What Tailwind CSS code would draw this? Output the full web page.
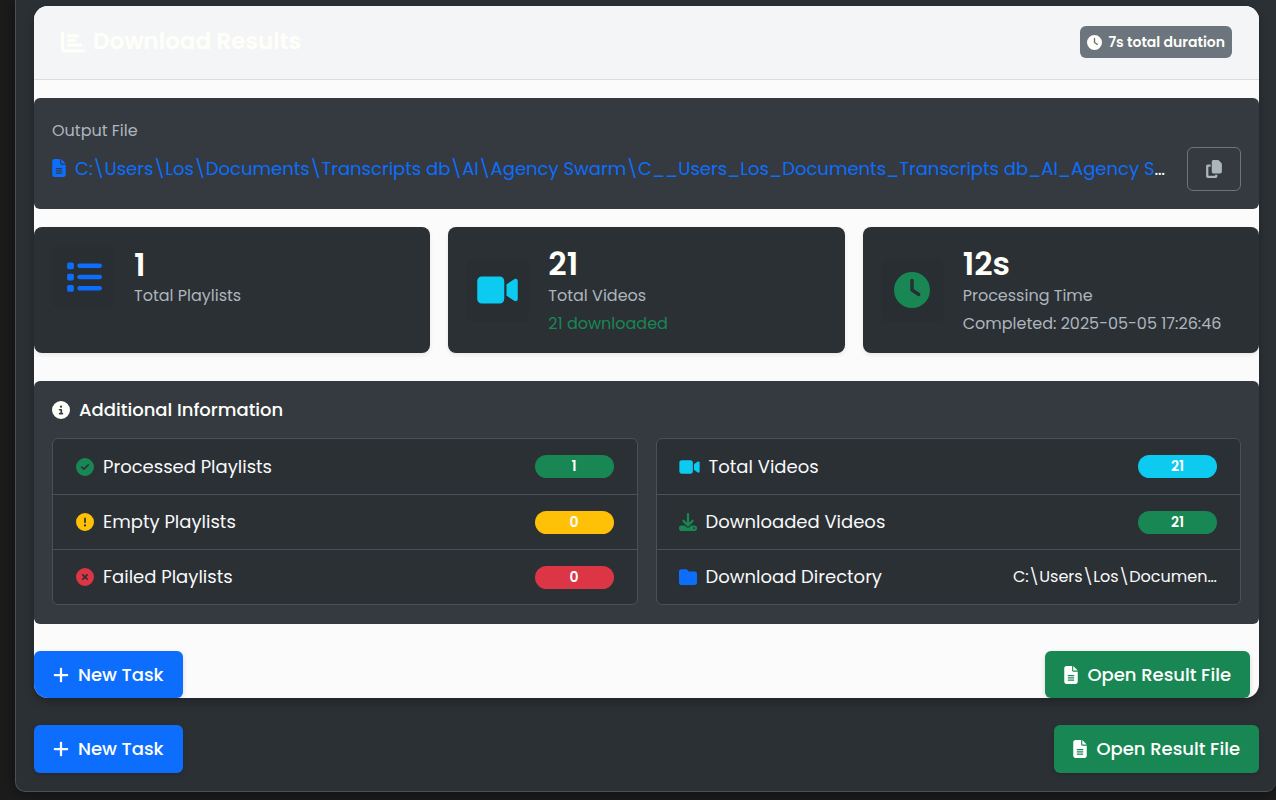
<!DOCTYPE html>
<html lang="en">
<head>
<meta charset="utf-8">
<meta name="viewport" content="width=device-width, initial-scale=1">
<title>Download Results</title>
<script src="https://cdn.jsdelivr.net/npm/@tailwindcss/browser@4"></script>
</head>
<body class="min-h-screen bg-[#1c1c1c] font-[Poppins,Inter,sans-serif] text-lg text-[#f8f9fa]">
<svg class="hidden" aria-hidden="true">
  <symbol id="chart" viewBox="0 0 512 512"><path d="M32 32c17.7 0 32 14.3 32 32V400c0 8.8 7.2 16 16 16H480c17.7 0 32 14.3 32 32s-14.3 32-32 32H80c-44.2 0-80-35.8-80-80V64C0 46.3 14.3 32 32 32zm96 96c0-17.7 14.3-32 32-32H352c17.7 0 32 14.3 32 32s-14.3 32-32 32H160c-17.7 0-32-14.3-32-32zm32 64H288c17.7 0 32 14.3 32 32s-14.3 32-32 32H160c-17.7 0-32-14.3-32-32s14.3-32 32-32zm0 96H416c17.7 0 32 14.3 32 32s-14.3 32-32 32H160c-17.7 0-32-14.3-32-32s14.3-32 32-32z"/></symbol>
  <symbol id="clock" viewBox="0 0 512 512"><path d="M256 0a256 256 0 1 1 0 512A256 256 0 1 1 256 0zM232 120V256c0 8 4 15.5 10.7 20l96 64c11 7.4 25.9 4.4 33.3-6.7s4.4-25.9-6.7-33.3L280 243.2V120c0-13.3-10.7-24-24-24s-24 10.7-24 24z"/></symbol>
  <symbol id="file" viewBox="0 0 384 512"><path d="M64 0C28.7 0 0 28.7 0 64V448c0 35.3 28.7 64 64 64H320c35.3 0 64-28.7 64-64V160H256c-17.7 0-32-14.3-32-32V0H64zM256 0V128H384L256 0zM112 256H272c8.8 0 16 7.2 16 16s-7.2 16-16 16H112c-8.8 0-16-7.2-16-16s7.2-16 16-16zm0 64H272c8.8 0 16 7.2 16 16s-7.2 16-16 16H112c-8.8 0-16-7.2-16-16s7.2-16 16-16zm0 64H272c8.8 0 16 7.2 16 16s-7.2 16-16 16H112c-8.8 0-16-7.2-16-16s7.2-16 16-16z"/></symbol>
  <symbol id="copy" viewBox="0 0 448 512"><path d="M208 0H332.1c12.7 0 24.9 5.1 33.9 14.1l67.9 67.9c9 9 14.1 21.2 14.1 33.9V336c0 26.5-21.5 48-48 48H208c-26.5 0-48-21.5-48-48V48c0-26.5 21.5-48 48-48zM48 128h80v64H64V448H256V416h64v48c0 26.5-21.5 48-48 48H48c-26.5 0-48-21.5-48-48V176c0-26.5 21.5-48 48-48z"/></symbol>
  <symbol id="list" viewBox="0 0 512 512"><path d="M40 48C26.7 48 16 58.7 16 72v48c0 13.3 10.7 24 24 24H88c13.3 0 24-10.7 24-24V72c0-13.3-10.7-24-24-24H40zM192 64c-17.7 0-32 14.3-32 32s14.3 32 32 32H480c17.7 0 32-14.3 32-32s-14.3-32-32-32H192zm0 160c-17.7 0-32 14.3-32 32s14.3 32 32 32H480c17.7 0 32-14.3 32-32s-14.3-32-32-32H192zm0 160c-17.7 0-32 14.3-32 32s14.3 32 32 32H480c17.7 0 32-14.3 32-32s-14.3-32-32-32H192zM16 232v48c0 13.3 10.7 24 24 24H88c13.3 0 24-10.7 24-24V232c0-13.3-10.7-24-24-24H40c-13.3 0-24 10.7-24 24zM40 368c-13.3 0-24 10.7-24 24v48c0 13.3 10.7 24 24 24H88c13.3 0 24-10.7 24-24V392c0-13.3-10.7-24-24-24H40z"/></symbol>
  <symbol id="video" viewBox="0 0 576 512"><path d="M0 128C0 92.7 28.7 64 64 64H320c35.3 0 64 28.7 64 64V384c0 35.3-28.7 64-64 64H64c-35.3 0-64-28.7-64-64V128zM559.1 99.8c10.4 5.6 16.9 16.4 16.9 28.2V384c0 11.8-6.5 22.6-16.9 28.2s-23 5-32.9-1.6l-96-64L416 337.1V174.9l14.2-9.5 96-64c9.8-6.5 22.4-7.2 32.9-1.6z"/></symbol>
  <symbol id="info" viewBox="0 0 512 512"><path d="M256 512A256 256 0 1 0 256 0a256 256 0 1 0 0 512zM216 336h24V272H216c-13.3 0-24-10.7-24-24s10.7-24 24-24h48c13.3 0 24 10.7 24 24v88h8c13.3 0 24 10.7 24 24s-10.7 24-24 24H216c-13.3 0-24-10.7-24-24s10.7-24 24-24zm40-208a32 32 0 1 1 0 64 32 32 0 1 1 0-64z"/></symbol>
  <symbol id="check" viewBox="0 0 512 512"><path d="M256 512A256 256 0 1 0 256 0a256 256 0 1 0 0 512zM369 209L241 337c-9.4 9.4-24.6 9.4-33.9 0l-64-64c-9.4-9.4-9.4-24.6 0-33.9s24.6-9.4 33.9 0l47 47L335 175c9.4-9.4 24.6-9.4 33.9 0s9.4 24.6 0 33.9z"/></symbol>
  <symbol id="warn" viewBox="0 0 512 512"><path d="M256 512A256 256 0 1 0 256 0a256 256 0 1 0 0 512zm0-384c13.3 0 24 10.7 24 24V264c0 13.3-10.7 24-24 24s-24-10.7-24-24V152c0-13.3 10.7-24 24-24zM224 352a32 32 0 1 1 64 0 32 32 0 1 1 -64 0z"/></symbol>
  <symbol id="fail" viewBox="0 0 512 512"><path d="M256 512A256 256 0 1 0 256 0a256 256 0 1 0 0 512zM175 175c9.4-9.4 24.6-9.4 33.9 0l47 47 47-47c9.4-9.4 24.6-9.4 33.9 0s9.4 24.6 0 33.9l-47 47 47 47c9.4 9.4 9.4 24.6 0 33.9s-24.6 9.4-33.9 0l-47-47-47 47c-9.4 9.4-24.6 9.4-33.9 0s-9.4-24.6 0-33.9l47-47-47-47c-9.4-9.4-9.4-24.6 0-33.9z"/></symbol>
  <symbol id="download" viewBox="0 0 512 512"><path d="M288 32c0-17.7-14.3-32-32-32s-32 14.3-32 32V274.7l-73.4-73.4c-12.5-12.5-32.8-12.5-45.3 0s-12.5 32.8 0 45.3l128 128c12.5 12.5 32.8 12.5 45.3 0l128-128c12.5-12.5 12.5-32.8 0-45.3s-32.8-12.5-45.3 0L288 274.7V32zM64 352c-35.3 0-64 28.7-64 64v32c0 35.3 28.7 64 64 64H448c35.3 0 64-28.7 64-64V416c0-35.3-28.7-64-64-64H346.5l-45.3 45.3c-25 25-65.5 25-90.5 0L165.5 352H64zm368 56a24 24 0 1 1 0 48 24 24 0 1 1 0-48z"/></symbol>
  <symbol id="folder" viewBox="0 0 512 512"><path d="M64 480H448c35.3 0 64-28.7 64-64V160c0-35.3-28.7-64-64-64H288c-10.1 0-19.6-4.7-25.6-12.8L243.2 57.6C231.1 41.5 212.1 32 192 32H64C28.7 32 0 60.7 0 96V416c0 35.3 28.7 64 64 64z"/></symbol>
  <symbol id="plus" viewBox="0 0 448 512"><path d="M256 80c0-17.7-14.3-32-32-32s-32 14.3-32 32V224H48c-17.7 0-32 14.3-32 32s14.3 32 32 32H192V432c0 17.7 14.3 32 32 32s32-14.3 32-32V288H400c17.7 0 32-14.3 32-32s-14.3-32-32-32H256V80z"/></symbol>
</svg>

<main class="ml-[15px] rounded-b-[10px] border-b border-l border-[#495057] bg-[#2b3035] pt-1.5 pr-[17px] pb-[18px] pl-[18px] shadow-[0_0_16px_rgba(0,0,0,0.5)]">
  <section class="overflow-hidden rounded-[14px] bg-[#fbfbfc] shadow-[0_4px_10px_rgba(0,0,0,0.25)]">
    <header class="flex h-[74px] items-center justify-between border-b border-[#dcdddd] bg-[#f4f5f6] px-[27px] pb-px">
      <h1 class="flex items-center gap-2 text-[23px] font-semibold text-[#fffffa]">
        <svg class="size-6 fill-current" aria-hidden="true"><use href="#chart"/></svg>Download Results
      </h1>
      <span class="flex h-8 items-center gap-1.5 rounded-md bg-[#6c757d] px-[7px] text-sm font-semibold text-[#fffffa]">
        <svg class="size-[15px] fill-current" aria-hidden="true"><use href="#clock"/></svg>7s total duration
      </span>
    </header>

    <div class="mt-[18px] rounded-md bg-[#343a40] px-[18px] pt-[21px] pb-[18px]">
      <div class="text-base leading-6 text-[#adb5bd]">Output File</div>
      <div class="mt-1 flex items-center gap-[14px]">
        <div class="min-w-0 flex-1 truncate text-lg leading-7">
          <a href="#" class="text-[#0d6efd]"><svg class="mr-[9px] mb-1 inline h-[18px] w-3.5 fill-current" aria-hidden="true"><use href="#file"/></svg>C:\Users\Los\Documents\Transcripts db\AI\Agency Swarm\C__Users_Los_Documents_Transcripts db_AI_Agency Swarm.txt</a>
        </div>
        <button type="button" aria-label="Copy path" class="flex h-11 w-[54px] shrink-0 items-center justify-center rounded-md border border-[#6c757d] text-[#adb5bd]">
          <svg class="h-[18px] w-4 fill-current" aria-hidden="true"><use href="#copy"/></svg>
        </button>
      </div>
    </div>

    <div class="mt-[18px] grid grid-cols-3 gap-[18px] text-base text-[#adb5bd]">
      <article class="flex h-[126px] items-start gap-[19px] rounded-lg bg-[#2b3035] px-[18px] pt-[18px] shadow-[0_2px_4px_rgba(0,0,0,0.08)]">
        <div class="flex h-[63px] w-[63px] shrink-0 items-center justify-center rounded-lg bg-[#292e32] text-[#0d6efd]"><svg class="size-9 fill-current" aria-hidden="true"><use href="#list"/></svg></div>
        <div><h2 class="text-[32px] leading-[39px] font-semibold text-[#fffffa]">1</h2><p class="leading-6">Total Playlists</p></div>
      </article>
      <article class="flex h-[126px] items-center gap-[19px] rounded-lg bg-[#2b3035] px-[18px] shadow-[0_2px_4px_rgba(0,0,0,0.08)]">
        <div class="flex h-[63px] w-[63px] shrink-0 items-center justify-center rounded-lg bg-[#292e32] text-[#0dcaf0]"><svg class="h-9 w-[41px] fill-current" aria-hidden="true"><use href="#video"/></svg></div>
        <div><h2 class="mb-0.5 text-[32px] leading-[37px] font-semibold text-[#fffffa]">21</h2><p class="leading-6">Total Videos</p><p class="mt-1 leading-6 text-[#198754]">21 downloaded</p></div>
      </article>
      <article class="flex h-[126px] items-center gap-[19px] rounded-lg bg-[#2b3035] px-[18px] shadow-[0_2px_4px_rgba(0,0,0,0.08)]">
        <div class="flex h-[63px] w-[63px] shrink-0 items-center justify-center rounded-lg bg-[#292e32] text-[#198754]"><svg class="size-9 fill-current" aria-hidden="true"><use href="#clock"/></svg></div>
        <div><h2 class="mb-0.5 text-[32px] leading-[37px] font-semibold text-[#fffffa]">12s</h2><p class="leading-6">Processing Time</p><p class="mt-1 leading-6 whitespace-nowrap">Completed: 2025-05-05 17:26:46</p></div>
      </article>
    </div>

    <div class="mt-7 rounded-md bg-[#343a40] px-[18px] pt-[18px] pb-[19px]">
      <h2 class="flex items-center gap-[9px] text-lg leading-[21px] font-medium text-[#fffffa]"><svg class="size-[18px] fill-current" aria-hidden="true"><use href="#info"/></svg>Additional Information</h2>
      <div class="mt-[18px] grid grid-cols-2 gap-[18px]">
        <ul class="divide-y divide-[#495057] rounded-md border border-[#495057] bg-[#2b3035]">
          <li class="flex h-14 items-center gap-[9px] px-[23px]"><svg class="size-[18px] fill-[#198754]" aria-hidden="true"><use href="#check"/></svg>Processed Playlists<span class="ml-auto w-[79px] rounded-full bg-[#198754] text-center text-sm leading-[23px] font-semibold text-white">1</span></li>
          <li class="flex h-[55px] items-center gap-[9px] px-[23px]"><svg class="size-[18px] fill-[#ffc107]" aria-hidden="true"><use href="#warn"/></svg>Empty Playlists<span class="ml-auto w-[79px] rounded-full bg-[#ffc107] text-center text-sm leading-[23px] font-semibold text-white">0</span></li>
          <li class="flex h-[54px] items-center gap-[9px] px-[23px]"><svg class="size-[18px] fill-[#dc3545]" aria-hidden="true"><use href="#fail"/></svg>Failed Playlists<span class="ml-auto w-[79px] rounded-full bg-[#dc3545] text-center text-sm leading-[23px] font-semibold text-white">0</span></li>
        </ul>
        <ul class="divide-y divide-[#495057] rounded-md border border-[#495057] bg-[#2b3035]">
          <li class="flex h-14 items-center gap-[9px] pr-[23px] pl-[22px]"><svg class="h-[18px] w-[21px] fill-[#0dcaf0]" aria-hidden="true"><use href="#video"/></svg>Total Videos<span class="ml-auto w-[79px] rounded-full bg-[#0dcaf0] text-center text-sm leading-[23px] font-semibold text-white">21</span></li>
          <li class="flex h-[55px] items-center gap-[9px] pr-[23px] pl-[22px]"><svg class="size-[18px] fill-[#198754]" aria-hidden="true"><use href="#download"/></svg>Downloaded Videos<span class="ml-auto w-[79px] rounded-full bg-[#198754] text-center text-sm leading-[23px] font-semibold text-white">21</span></li>
          <li class="flex h-[54px] items-center gap-[9px] pr-[23px] pl-[22px]"><svg class="size-[18px] fill-[#0d6efd]" aria-hidden="true"><use href="#folder"/></svg>Download Directory<span class="ml-auto w-[204px] truncate text-base">C:\Users\Los\Documents\Transcripts db</span></li>
        </ul>
      </div>
    </div>

    <div class="mt-[27px] flex justify-between pr-[9px] font-medium text-white">
      <button type="button" class="flex h-[47px] items-center gap-[9px] rounded-md bg-[#0d6efd] px-[19px] shadow-[0_2px_5px_rgba(0,0,0,0.15)]"><svg class="h-[18px] w-4 fill-current" aria-hidden="true"><use href="#plus"/></svg>New Task</button>
      <button type="button" class="flex h-[47px] items-center gap-[9px] rounded-md bg-[#198754] px-[19px] shadow-[0_2px_5px_rgba(0,0,0,0.15)]"><svg class="h-[18px] w-3.5 fill-current" aria-hidden="true"><use href="#file"/></svg>Open Result File</button>
    </div>
  </section>

  <div class="mt-[27px] flex justify-between font-medium text-white">
    <button type="button" class="flex h-12 items-center gap-[9px] rounded-md bg-[#0d6efd] px-[19px] shadow-[0_2px_5px_rgba(0,0,0,0.15)]"><svg class="h-[18px] w-4 fill-current" aria-hidden="true"><use href="#plus"/></svg>New Task</button>
    <button type="button" class="flex h-12 items-center gap-[9px] rounded-md bg-[#198754] px-[19px] shadow-[0_2px_5px_rgba(0,0,0,0.15)]"><svg class="h-[18px] w-3.5 fill-current" aria-hidden="true"><use href="#file"/></svg>Open Result File</button>
  </div>
</main>
</body>
</html>
